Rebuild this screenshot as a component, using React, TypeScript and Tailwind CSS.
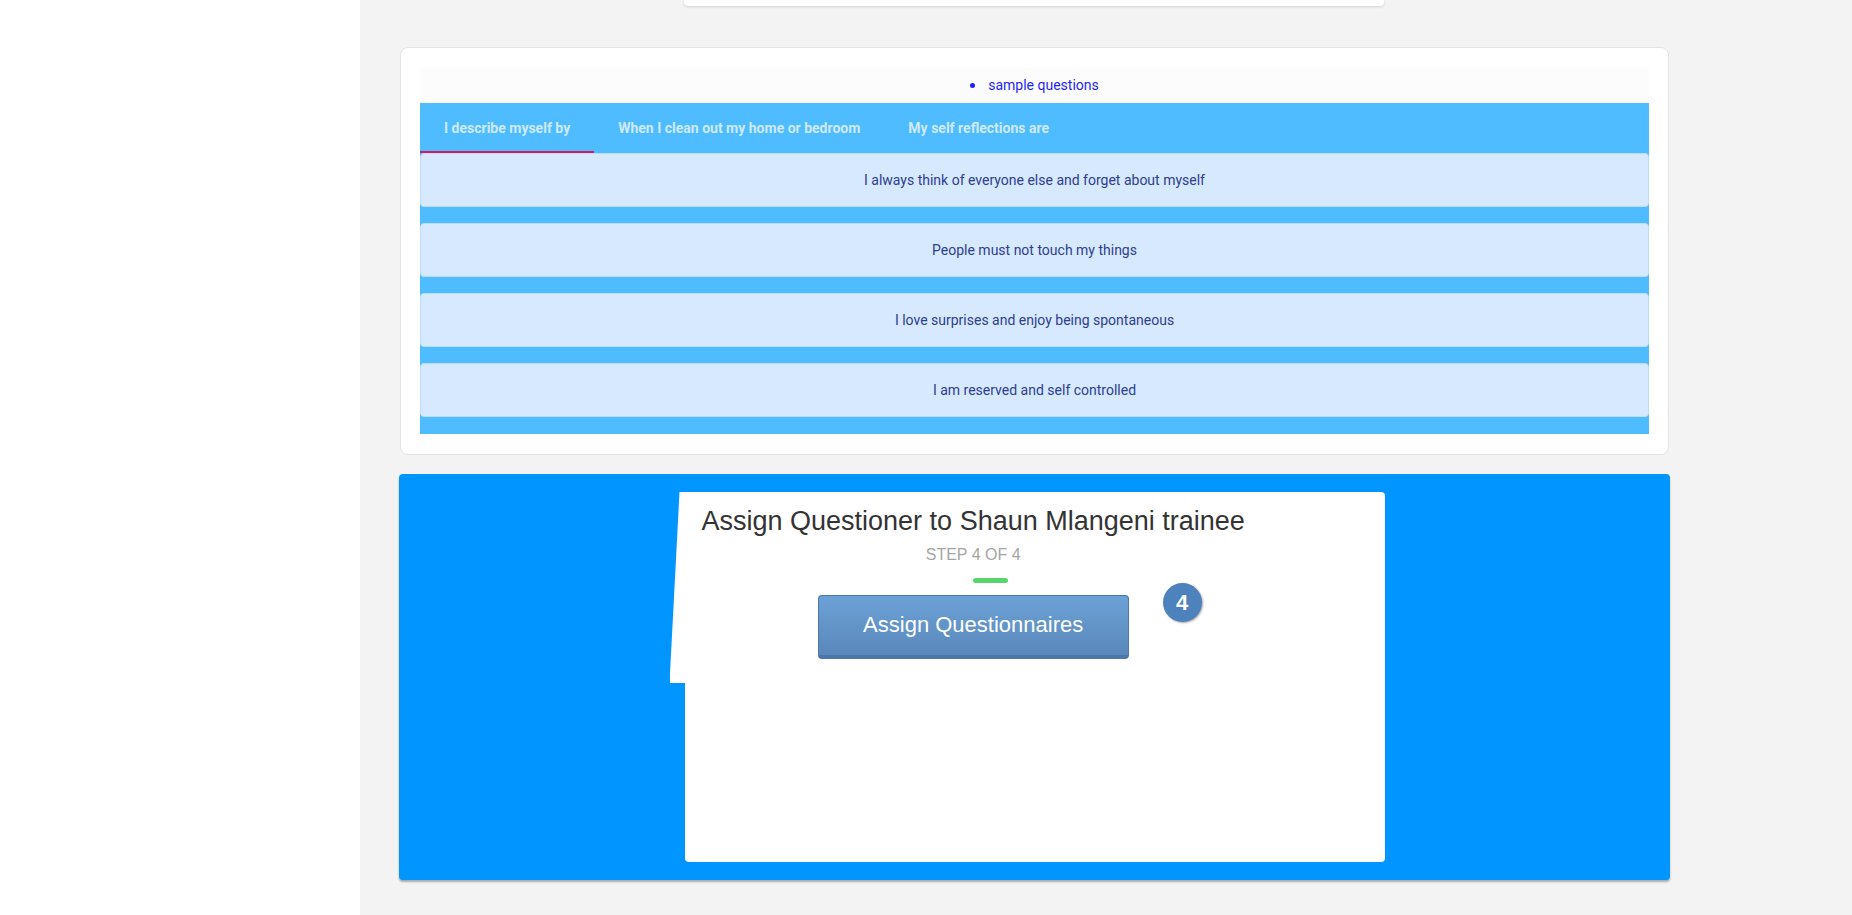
import React from "react";

const answers = [
  "I always think of everyone else and forget about myself",
  "People must not touch my things",
  "I love surprises and enjoy being spontaneous",
  "I am reserved and self controlled",
];

const tabs = ["I describe myself by", "When I clean out my home or bedroom", "My self reflections are"];

export default function App() {
  return (
    <div className="flex h-[915px] w-full overflow-hidden bg-[#f3f3f3]">
      <div className="w-[360px] shrink-0 bg-white" />

      <div className="flex w-[1271px] flex-col pl-[39px]">
        {/* tail of previous card */}
        <div className="ml-[285px] h-[6px] w-[700px] rounded-b-[4px] bg-white shadow-[0_1px_3px_rgba(0,0,0,0.12)]" />

        {/* questions card */}
        <div className="mt-[41px] ml-[1px] w-[1269px] rounded-[8px] border border-[#e4e4e4] bg-white px-[19px] pt-[20px] pb-[20px] font-['Roboto',sans-serif]">
          <div className="flex h-[35px] items-center justify-center gap-[13px] bg-[#fcfcfc] text-[14px] text-[#1f1fff]">
            <span className="h-[5px] w-[5px] rounded-full bg-[#1f1fff]" />
            <span>sample questions</span>
          </div>
          <div className="bg-[#4ebcff] pb-[17px]">
            <div className="flex h-[50px]">
              {tabs.map((t, i) => (
                <div
                  key={t}
                  className={
                    i === 0
                      ? "flex items-center border-b-2 border-[#d81b60] px-6 pt-[2px] text-[14px] font-bold text-[#cfe9fd]"
                      : "flex items-center border-b-2 border-transparent px-6 pt-[2px] text-[14px] font-bold text-[#cfe9fd]"
                  }
                >
                  {t}
                </div>
              ))}
            </div>
            <div className="flex flex-col gap-[16px]">
              {answers.map((a) => (
                <div
                  key={a}
                  className="flex h-[54px] items-center justify-center rounded-[4px] border border-[#bcdcfd] bg-[#d7e9ff] text-[14px] text-[#2e3d8e]"
                >
                  {a}
                </div>
              ))}
            </div>
          </div>
        </div>

        {/* assign panel */}
        <div className="mt-[19px] flex h-[406px] w-[1271px] justify-center rounded-[4px] bg-[#0095ff] pt-[18px] shadow-[0_2px_2px_rgba(0,0,0,0.3)]">
          <div className="relative h-[370px] w-[700px] rounded-[4px] bg-white font-['Liberation_Sans',Arial,sans-serif]">
            <div className="absolute top-0 left-[-15px] h-[191px] w-[20px] bg-white [clip-path:polygon(10px_0,100%_0,100%_100%,0_100%)]" />
            <div className="relative inline-block pt-[12px] pl-[17px]">
              <div className="text-[27px] leading-[34px] text-[#333]">Assign Questioner to Shaun Mlangeni trainee</div>
              <div className="mt-[7px] text-center text-[16px] leading-[20px] text-[#a5a5a5]">STEP 4 OF 4</div>
              <div className="mt-[13px] ml-[50%] h-[5px] w-[35px] rounded-full bg-[#5ad56e]" />
              <div className="mt-[12px] flex justify-center">
                <div className="relative">
                  <button className="flex h-[64px] w-[311px] items-center justify-center rounded-[4px] border border-[#4c77a8] border-b-[4px] bg-gradient-to-b from-[#6da2d6] to-[#5987bb] pb-[2px] text-[22px] text-white">
                    Assign Questionnaires
                  </button>
                  <div className="absolute top-[-12px] left-[345px] flex h-[39px] w-[39px] items-center justify-center rounded-full bg-[#4d82bd] text-[22px] font-bold text-white shadow-[1px_1px_2px_rgba(0,0,0,0.35)]">
                    4
                  </div>
                </div>
              </div>
            </div>
          </div>
        </div>
      </div>
    </div>
  );
}
